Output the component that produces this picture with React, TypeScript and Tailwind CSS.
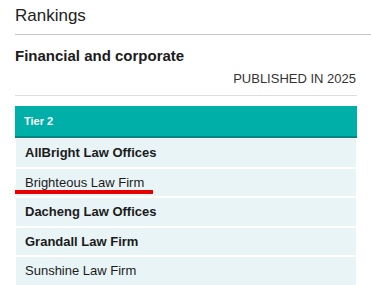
const firms = [
  { name: "AllBright Law Offices", bold: true, height: "h-[28px]" },
  { name: "Brighteous Law Firm", bold: false, marked: true, height: "h-[27px]" },
  { name: "Dacheng Law Offices", bold: true, height: "h-[28px]" },
  { name: "Grandall Law Firm", bold: true, height: "h-[27px]" },
  { name: "Sunshine Law Firm", bold: false, height: "h-[28px]" },
];

export default function App() {
  return (
    <div className="h-[285px] w-[371px] overflow-hidden bg-white pl-[15px] font-['Liberation_Sans',Arial,sans-serif] text-[#1b1b1b]">
      <div className="h-[35px] border-b border-[#c4c4c4] pt-[6px]">
        <h2 className="text-[17px] leading-[20px] text-[#222]">Rankings</h2>
      </div>

      <div className="w-[342px]">
        <h3 className="mt-[12px] text-[15px] font-bold leading-[18px]">Financial and corporate</h3>
        <div className="mt-[6px] border-b border-[#dedede] pb-[8px] pr-px text-right text-[13px] leading-[16px] text-[#333]">
          PUBLISHED IN 2025
        </div>

        <div className="mt-[10px] flex h-[32px] items-center border-b-2 border-[#00877f] bg-[#00afa8] pl-[9px] text-[11px] font-bold text-white">
          Tier 2
        </div>

        <ul className="mx-px mt-px flex flex-col gap-[2px]">
          {firms.map((firm) => (
            <li
              key={firm.name}
              className={`relative flex ${firm.height} items-center bg-[#e8f4f6] pl-[9px] text-[13px] ${firm.bold ? "font-bold" : ""}`}
            >
              {firm.name}
              {firm.marked && <span className="absolute bottom-[2px] left-[-1px] h-[4px] w-[138px] bg-[#e60000]" />}
            </li>
          ))}
        </ul>
      </div>
    </div>
  );
}
